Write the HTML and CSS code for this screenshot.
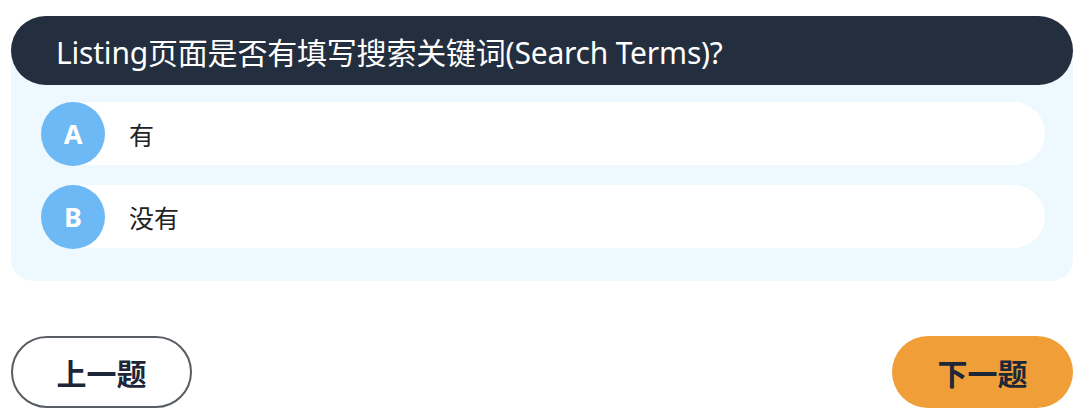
FILE: index.html
```html
<!DOCTYPE html>
<html>
<head>
  <meta charset="utf-8">
  <title>Listing 自查</title>
  <link rel="stylesheet" href="styles.css">
</head>
<body>

  <div class="quiz">
    <!-- Question -->
    <div class="question-title">Listing页面是否有填写搜索关键词(Search Terms)?</div>

    <div class="options">
      <div class="option">
        <span class="option-key">A</span>
        <span class="option-text">有</span>
      </div>
      <div class="option">
        <span class="option-key">B</span>
        <span class="option-text">没有</span>
      </div>
    </div>

    <!-- Navigation -->
    <div class="nav">
      <button class="btn btn-prev">上一题</button>
      <button class="btn btn-next">下一题</button>
    </div>
  </div>

</body>
</html>
```

FILE: styles.css
```css
body {
  margin: 0;
  background: #fff;
  font-family: "Noto Sans", "Noto Sans CJK SC", sans-serif;
  overflow: hidden;
}

.quiz {
  padding: 16px 7px 0 11px;
}

.question-title {
  position: relative;
  z-index: 1;
  height: 69px;
  display: flex;
  align-items: center;
  padding-left: 45px;
  background: #232e3e;
  color: #fff;
  font-size: 30px;
  letter-spacing: -0.2px;
  border-radius: 35px;
}

/* Answer panel sits under the title bar */
.options {
  margin-top: -34px;
  padding: 51px 28px 33px 30px;
  background: #eef8ff;
  border-radius: 0 0 22px 22px;
  display: flex;
  flex-direction: column;
  gap: 20px;
}

.option {
  height: 63px;
  display: flex;
  align-items: center;
  background: #fff;
  border-radius: 32px;
}

.option-key {
  width: 64px;
  height: 64px;
  flex-shrink: 0;
  border-radius: 50%;
  background: #6cb9f5;
  color: #fff;
  font-size: 27px;
  font-weight: 700;
  display: flex;
  align-items: center;
  justify-content: center;
}

.option-text {
  margin-left: 24px;
  font-size: 25px;
  color: #222;
}

.nav {
  margin-top: 55px;
  display: flex;
  justify-content: space-between;
}

.btn {
  width: 181px;
  height: 72px;
  border-radius: 36px;
  font-family: "Noto Sans CJK SC", sans-serif;
  font-size: 30px;
  font-weight: 700;
  color: #1d2737;
  cursor: pointer;
}

.btn-prev {
  background: #fff;
  border: 2px solid #585d64;
}

.btn-next {
  background: #f09e38;
  border: none;
}
```
